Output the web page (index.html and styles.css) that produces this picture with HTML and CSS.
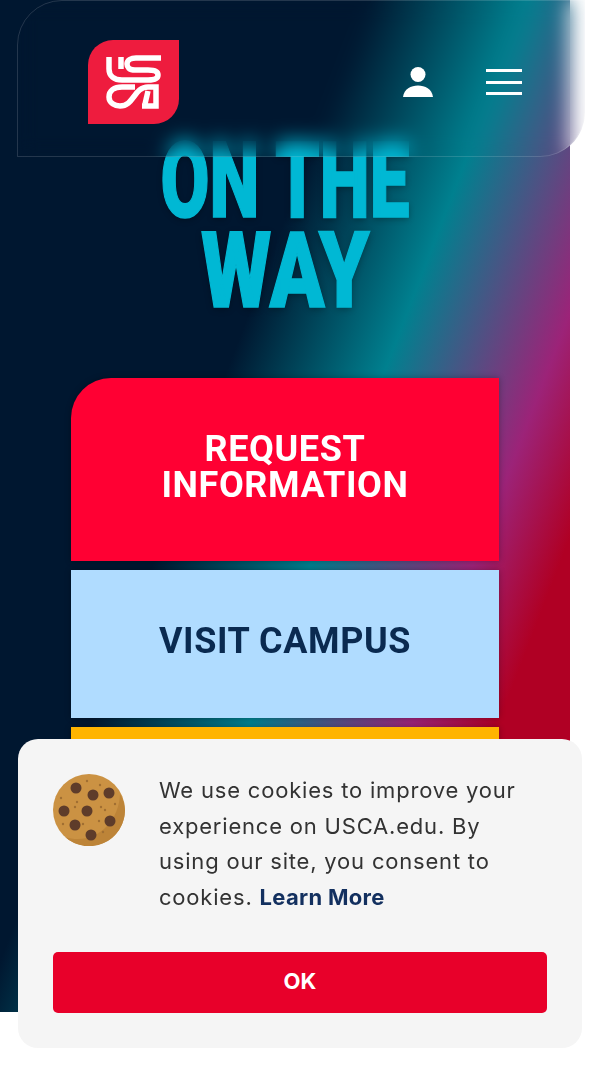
FILE: index.html
```html
<!DOCTYPE html>
<html>
<head>
    <title>USCA</title>
    <link rel="stylesheet" href="styles.css">
</head>
<body>

    <div class="hero">
        <h1 class="hero-title">ON THE<br><span class="hero-way">WAY</span></h1>
        <div class="actions">
            <a class="action action-red">REQUEST<br>INFORMATION</a>
            <a class="action action-blue">VISIT CAMPUS</a>
            <a class="action action-yellow"></a>
        </div>
    </div>

    <header class="site-header">
        <svg class="logo" viewBox="0 0 91 84">
            <path class="logo-bg" d="M25 0H91V59A25 25 0 0 1 66 84H0V25A25 25 0 0 1 25 0Z"/>
            <g class="logo-lines">
                <path d="M21 17V29C21 36 26 40 34 40H60C67 40 70 38 70 35C70 32 67 30 60 30H47C41 30 39 27 39 24C39 20 43 18 48 18H73"/>
                <path d="M33 17V29"/>
                <path d="M47 47H34C26 47 21 51 21 57C21 63 27 66 32 66C46 66 46 47 60 47H68V66H54"/>
                <path d="M60 51L57 64"/>
            </g>
        </svg>
        <div class="header-icons">
            <svg class="icon-user" viewBox="0 0 32 32">
                <circle cx="16" cy="8.500" r="7.500"/>
                <path d="M1 31C2 23 9 19.500 16 19.500S30 23 31 31Z"/>
            </svg>
            <div class="icon-menu"><span></span><span></span><span></span></div>
        </div>
    </header>

    <div class="cookie-box">
        <div class="cookie-top">
            <svg class="cookie-img" viewBox="0 0 72 72">
                <circle cx="36" cy="36" r="36" fill="#cb9243"/>
                <path d="M72 36A36 36 0 0 1 12 63C40 72 66 50 67 20A36 36 0 0 1 72 36Z" fill="#bd8438"/>
                <g fill="#5e3c2a">
                    <circle cx="23" cy="14" r="5.500"/>
                    <circle cx="40" cy="21" r="5.500"/>
                    <circle cx="56" cy="19" r="5.500"/>
                    <circle cx="11" cy="37" r="5.500"/>
                    <circle cx="34" cy="37" r="5.500"/>
                    <circle cx="57" cy="47" r="5.500"/>
                    <circle cx="22" cy="51" r="5.500"/>
                    <circle cx="38" cy="61" r="5.500"/>
                </g>
                <g fill="#a06f33">
                    <circle cx="34" cy="7" r="1.200"/>
                    <circle cx="47" cy="11" r="1.200"/>
                    <circle cx="8" cy="24" r="1.200"/>
                    <circle cx="24" cy="28" r="1.200"/>
                    <circle cx="22" cy="33" r="1.200"/>
                    <circle cx="48" cy="33" r="1.200"/>
                    <circle cx="52" cy="36" r="1.200"/>
                    <circle cx="46" cy="47" r="1.200"/>
                    <circle cx="30" cy="50" r="1.200"/>
                    <circle cx="10" cy="50" r="1.200"/>
                    <circle cx="50" cy="58" r="1.200"/>
                    <circle cx="62" cy="30" r="1.200"/>
                </g>
            </svg>
            <p class="cookie-text">We use cookies to improve your experience on USCA.edu. By using our site, you consent to cookies. <a class="cookie-link">Learn More</a></p>
        </div>
        <button class="cookie-ok">OK</button>
    </div>

</body>
</html>
```

FILE: styles.css
```css
html, body {
    margin: 0;
    padding: 0;
    height: 1065px;
    overflow: hidden;
    background-color: white;
}

.hero {
    box-sizing: border-box;
    width: 570px;
    height: 1012px;
    padding-top: 136px;
    overflow: hidden;
    background: linear-gradient(111deg, #001730 38.500%, #00808f 55%, #9c2378 72%, #b00024 81%, #b00024 100%);
}

.hero-title {
    margin: 0 0 62px;
    text-align: center;
    font-family: Roboto, sans-serif;
    font-size: 106px;
    font-weight: 900;
    line-height: 90px;
    color: #00b8d4;
    -webkit-text-stroke: 1.500px #00b8d4;
    text-shadow: 0 2px 8px rgba(0, 0, 0, 0.3);
    transform: scaleX(0.67);
    filter: blur(0.4px);
}

.hero-way {
    display: inline-block;
    transform: scaleX(1.14);
}

.actions {
    display: flex;
    flex-direction: column;
    gap: 9px;
    margin: 0 71px;
}

.action {
    display: flex;
    align-items: center;
    justify-content: center;
    text-align: center;
    font-family: Roboto, sans-serif;
    font-size: 36px;
    font-weight: bold;
    line-height: 36px;
    letter-spacing: 0.6px;
    box-shadow: 0 0 6px rgba(0, 0, 0, 0.3);
    filter: blur(0.3px);
}

.action-red {
    box-sizing: border-box;
    height: 182.500px;
    padding-bottom: 4px;
    border-top-left-radius: 40px;
    background-color: #ff0033;
    color: white;
}

.action-blue {
    box-sizing: border-box;
    height: 148px;
    padding-bottom: 6px;
    background-color: #b0dcff;
    color: #0a2a50;
}

.action-yellow {
    height: 148px;
    background-color: #ffb400;
}

.site-header {
    position: absolute;
    top: 0;
    left: 17px;
    box-sizing: border-box;
    display: flex;
    align-items: flex-start;
    justify-content: space-between;
    width: 568px;
    height: 157px;
    padding: 39px 62px 0 70px;
    border: 1px solid rgba(255, 255, 255, 0.14);
    border-top-left-radius: 45px;
    border-bottom-right-radius: 45px;
    backdrop-filter: blur(10px);
}

.logo {
    width: 91px;
    height: 84px;
    filter: blur(0.7px);
}

.logo-bg {
    fill: #ee1c3e;
}

.logo-lines {
    fill: none;
    stroke: white;
    stroke-width: 5.500;
}

.header-icons {
    display: flex;
    align-items: center;
    gap: 52px;
    margin-top: 26px;
    filter: blur(0.5px);
}

.icon-user {
    width: 32px;
    height: 32px;
    fill: white;
}

.icon-menu {
    display: flex;
    flex-direction: column;
    gap: 8.500px;
    width: 36px;
}

.icon-menu span {
    height: 3px;
    background-color: white;
}

.cookie-box {
    position: absolute;
    top: 739px;
    left: 18px;
    box-sizing: border-box;
    width: 564px;
    height: 309px;
    padding: 35px 35px 0;
    border-radius: 20px;
    background-color: #f5f5f5;
}

.cookie-top {
    display: flex;
    gap: 34px;
    height: 178px;
}

.cookie-img {
    flex: none;
    width: 72px;
    height: 72px;
    filter: blur(0.4px);
}

.cookie-text {
    width: 360px;
    margin: -1px 0 0;
    font-family: Inter, sans-serif;
    font-size: 22px;
    line-height: 35.500px;
    letter-spacing: 0.8px;
    color: #333;
    filter: blur(0.3px);
}

.cookie-link {
    font-weight: bold;
    color: #13305f;
    letter-spacing: 0.3px;
}

.cookie-ok {
    display: block;
    width: 494px;
    height: 61px;
    padding: 0 0 3px;
    border: none;
    border-radius: 5px;
    background-color: #e8002a;
    color: white;
    font-family: Inter, sans-serif;
    font-size: 22px;
    font-weight: bold;
}
```
